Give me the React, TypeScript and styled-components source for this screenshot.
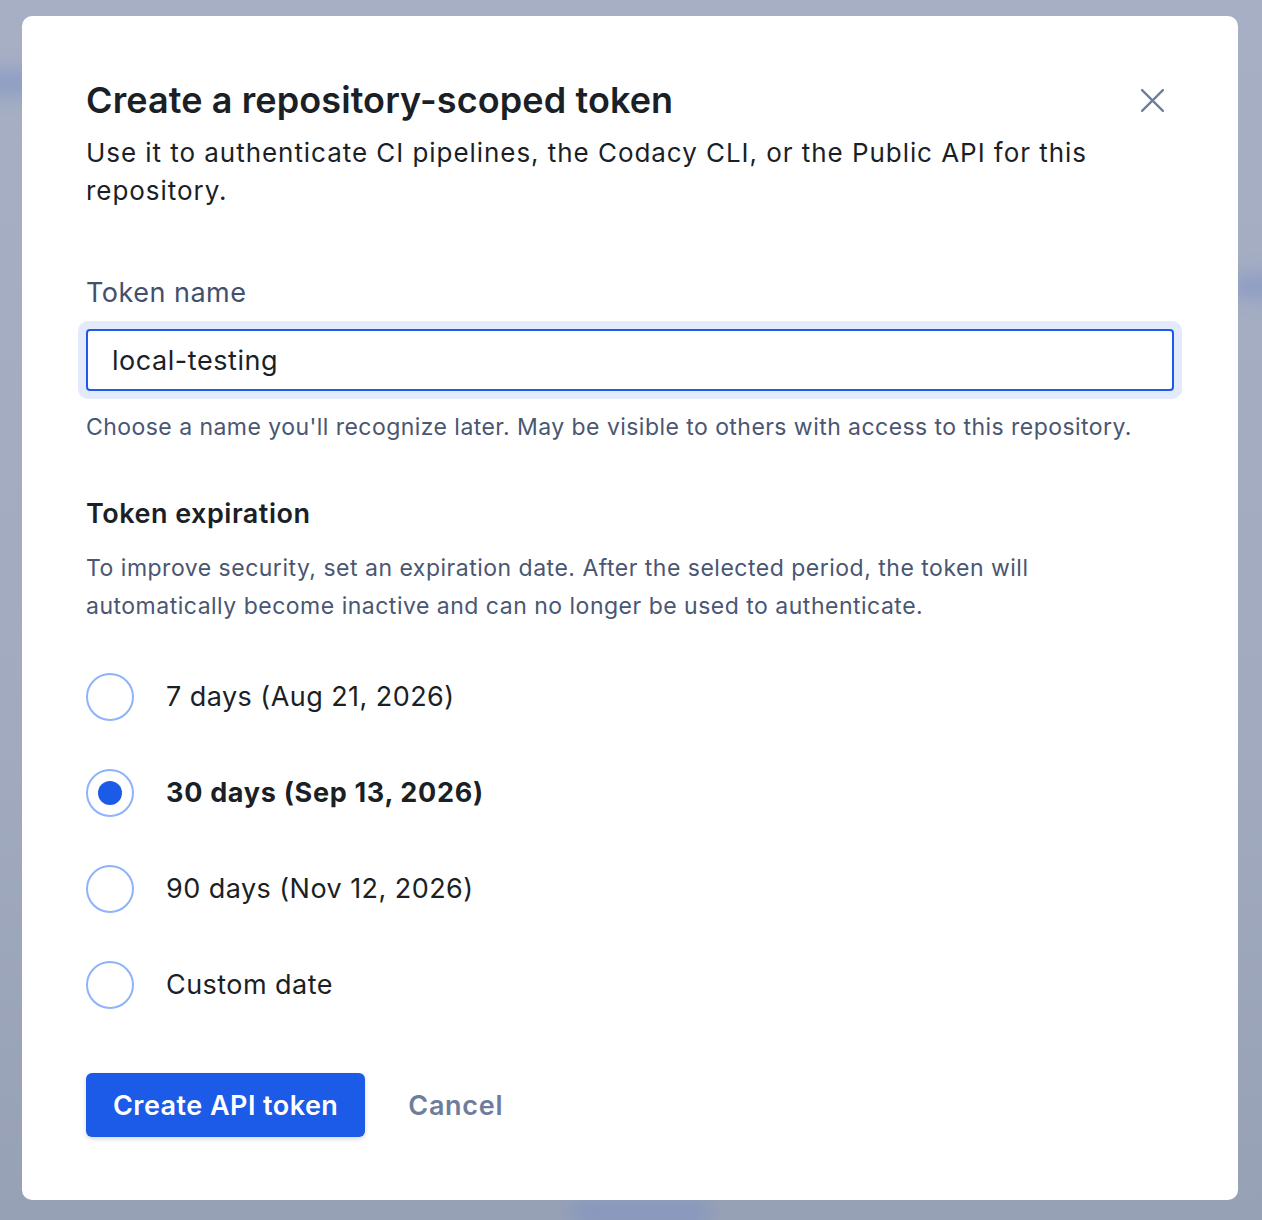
import { useState } from 'react';
import styled, { createGlobalStyle } from 'styled-components';

const GlobalStyle = createGlobalStyle`
  html, body {
    margin: 0;
    padding: 0;
  }
  body {
    font-family: Inter, 'Noto Sans', sans-serif;
    -webkit-font-smoothing: antialiased;
  }
  * {
    box-sizing: border-box;
  }
`;

const options = [
  { id: '7', label: '7 days (Aug 21, 2026)' },
  { id: '30', label: '30 days (Sep 13, 2026)' },
  { id: '90', label: '90 days (Nov 12, 2026)' },
  { id: 'custom', label: 'Custom date' },
];

export default function App() {
  const [name, setName] = useState('local-testing');
  const [expiry, setExpiry] = useState('30');

  return (
    <>
      <GlobalStyle />
      <Backdrop>
        <Blur $top={70} $left={-40} $w={90} $h={26} />
        <Blur $top={274} $left={1230} $w={60} $h={24} />
        <Blur $top={1198} $left={570} $w={140} $h={30} />
        <Dialog role='dialog' aria-labelledby='token-title'>
          <Header>
            <HeaderText>
              <Title id='token-title'>Create a repository-scoped token</Title>
              <Subtitle>
                Use it to authenticate CI pipelines, the Codacy CLI, or the
                Public API for this repository.
              </Subtitle>
            </HeaderText>
            <CloseButton aria-label='Close'>
              <svg width='25' height='25' viewBox='0 0 24 24' fill='none'>
                <path
                  d='M2 2L22 22M22 2L2 22'
                  stroke='currentColor'
                  strokeWidth='2.2'
                  strokeLinecap='round'
                />
              </svg>
            </CloseButton>
          </Header>

          <Field>
            <Label htmlFor='token-name'>Token name</Label>
            <InputRing>
              <Input
                id='token-name'
                value={name}
                onChange={(e) => setName(e.target.value)}
                autoFocus
              />
            </InputRing>
            <Hint>
              Choose a name you'll recognize later. May be visible to others
              with access to this repository.
            </Hint>
          </Field>

          <Section>
            <SectionTitle>Token expiration</SectionTitle>
            <SectionText>
              To improve security, set an expiration date. After the selected
              period, the token will automatically become inactive and can no
              longer be used to authenticate.
            </SectionText>
          </Section>

          <RadioList>
            {options.map((opt) => (
              <RadioRow key={opt.id}>
                <HiddenRadio
                  type='radio'
                  name='expiry'
                  checked={expiry === opt.id}
                  onChange={() => setExpiry(opt.id)}
                />
                <RadioCircle $checked={expiry === opt.id} />
                <RadioLabel $checked={expiry === opt.id}>{opt.label}</RadioLabel>
              </RadioRow>
            ))}
          </RadioList>

          <Actions>
            <PrimaryButton>Create API token</PrimaryButton>
            <TextButton>Cancel</TextButton>
          </Actions>
        </Dialog>
      </Backdrop>
    </>
  );
}

const Backdrop = styled.div`
  position: relative;
  overflow: hidden;
  min-height: 1220px;
  padding: 16px 24px 20px 22px;
  background: linear-gradient(180deg, #a6afc4 0%, #a1aabf 60%, #97a1b6 100%);
`;

const Blur = styled.div<{ $top: number; $left: number; $w: number; $h: number }>`
  position: absolute;
  top: ${(p) => p.$top}px;
  left: ${(p) => p.$left}px;
  width: ${(p) => p.$w}px;
  height: ${(p) => p.$h}px;
  border-radius: 12px;
  background: #7f92c4;
  filter: blur(9px);
  opacity: 0.6;
`;

const Dialog = styled.div`
  position: relative;
  width: 1216px;
  height: 1184px;
  padding: 64px 64px 64px;
  background: #ffffff;
  border-radius: 10px;
  display: flex;
  flex-direction: column;
`;

const Header = styled.div`
  display: flex;
  align-items: flex-start;
  justify-content: space-between;
`;

const HeaderText = styled.div`
  display: flex;
  flex-direction: column;
  gap: 14px;
`;

const Title = styled.h1`
  margin: 0;
  font-size: 36px;
  line-height: 40px;
  font-weight: 600;
  color: #1b1f26;
  letter-spacing: 0.1px;
`;

const Subtitle = styled.p`
  margin: 0;
  font-size: 26px;
  line-height: 38px;
  color: #1b1f26;
  letter-spacing: 0.95px;
`;

const CloseButton = styled.button`
  flex: none;
  width: 44px;
  height: 44px;
  margin-top: -2px;
  display: flex;
  align-items: center;
  justify-content: center;
  border: none;
  background: transparent;
  color: #6e7d9c;
  padding: 0;
  cursor: pointer;
`;

const Field = styled.div`
  margin-top: 65px;
  display: flex;
  flex-direction: column;
`;

const Label = styled.label`
  font-size: 27px;
  line-height: 36px;
  color: #44506b;
  letter-spacing: 0.5px;
  margin-bottom: 10px;
`;

const InputRing = styled.div`
  margin: 0 -8px;
  padding: 8px;
  border-radius: 10px;
  background: #e3eafc;
`;

const Input = styled.input`
  display: block;
  width: 100%;
  height: 62px;
  padding: 0 24px;
  border: 2px solid #1c5ae8;
  border-radius: 4px;
  background: #ffffff;
  font-family: inherit;
  font-size: 27px;
  letter-spacing: 0.55px;
  color: #1b1f26;
  outline: none;
  caret-color: #1b1f26;
`;

const Hint = styled.p`
  margin: 12px 0 0;
  font-size: 23px;
  line-height: 32px;
  color: #4a5672;
  letter-spacing: 0.45px;
`;

const Section = styled.div`
  margin-top: 53px;
  display: flex;
  flex-direction: column;
  gap: 17px;
`;

const SectionTitle = styled.h2`
  margin: 0;
  font-size: 27px;
  line-height: 36px;
  font-weight: 600;
  color: #1b1f26;
  letter-spacing: 0.5px;
`;

const SectionText = styled.p`
  margin: 0;
  font-size: 23px;
  line-height: 38px;
  color: #4a5672;
  max-width: 1000px;
  letter-spacing: 0.5px;
`;

const RadioList = styled.div`
  margin-top: 48px;
  display: flex;
  flex-direction: column;
  gap: 48px;
`;

const RadioRow = styled.label`
  display: flex;
  align-items: center;
  gap: 32px;
  height: 48px;
  cursor: pointer;
`;

const HiddenRadio = styled.input`
  position: absolute;
  opacity: 0;
  width: 0;
  height: 0;
`;

const RadioCircle = styled.span<{ $checked: boolean }>`
  flex: none;
  width: 48px;
  height: 48px;
  border-radius: 50%;
  border: 2px solid #8eb2fb;
  background: #ffffff;
  display: flex;
  align-items: center;
  justify-content: center;

  &::after {
    content: '';
    width: 24px;
    height: 24px;
    border-radius: 50%;
    background: #1c5ae8;
    display: ${(p) => (p.$checked ? 'block' : 'none')};
  }
`;

const RadioLabel = styled.span<{ $checked: boolean }>`
  font-size: 27px;
  line-height: 36px;
  font-weight: ${(p) => (p.$checked ? 700 : 400)};
  color: #1b1f26;
  letter-spacing: ${(p) => (p.$checked ? '0.7px' : '0.45px')};
`;

const Actions = styled.div`
  margin-top: 64px;
  display: flex;
  align-items: center;
  gap: 22px;
`;

const PrimaryButton = styled.button`
  height: 64px;
  padding: 0 27px;
  border: none;
  border-radius: 6px;
  background: #1c5ae8;
  box-shadow: 0 2px 4px rgba(28, 40, 80, 0.18);
  color: #ffffff;
  font-family: inherit;
  font-size: 27px;
  font-weight: 600;
  letter-spacing: 0.45px;
  cursor: pointer;
`;

const TextButton = styled.button`
  height: 64px;
  padding: 0 21px;
  border: none;
  background: transparent;
  color: #6e7d9c;
  font-family: inherit;
  font-size: 27px;
  font-weight: 600;
  letter-spacing: 0.7px;
  cursor: pointer;
`;
